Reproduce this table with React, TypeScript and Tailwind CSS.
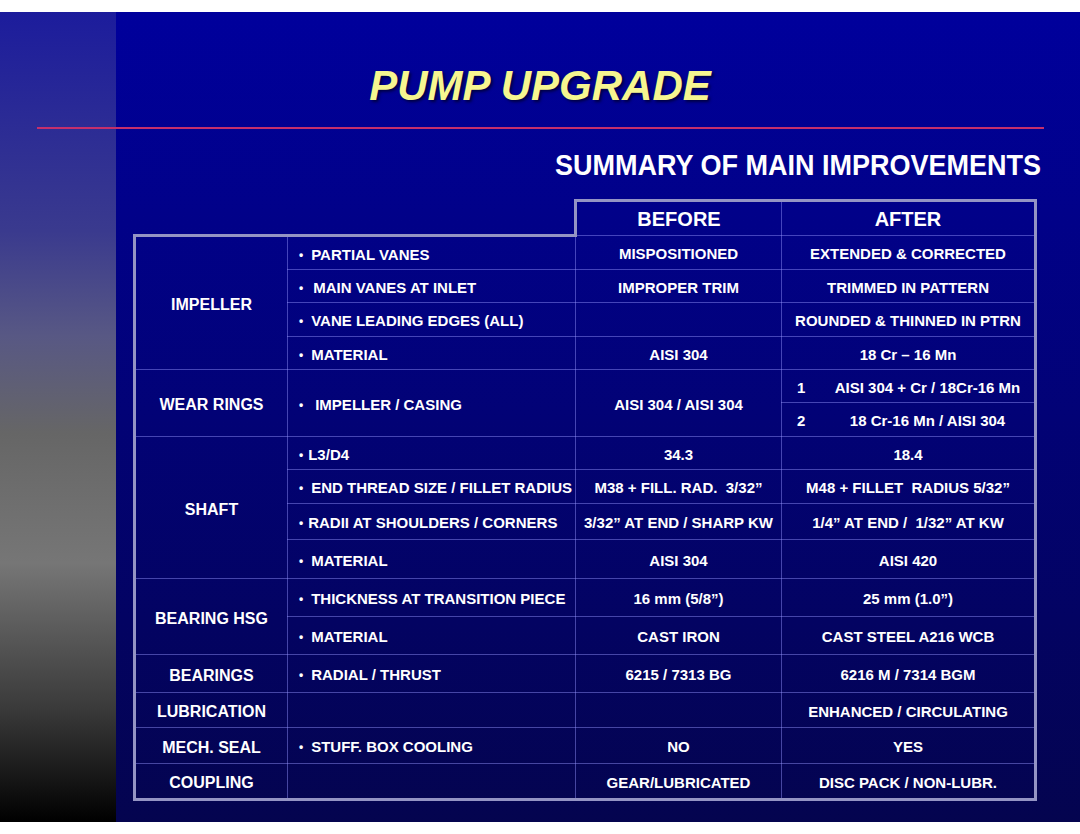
import React from 'react';

type Row = {
  item?: string | null;
  pad?: string;
  before?: string | null;
  after: React.ReactNode;
  h: string;
  span?: number;
};

type Group = { name: string; rows: Row[] };

const GROUPS: Group[] = [
  {
    name: 'IMPELLER',
    rows: [
      { item: 'PARTIAL VANES', before: 'MISPOSITIONED', after: 'EXTENDED & CORRECTED', h: 'h-[34px]' },
      { item: 'MAIN VANES AT INLET', pad: 'ml-[10px]', before: 'IMPROPER TRIM', after: 'TRIMMED IN PATTERN', h: 'h-[33px]' },
      { item: 'VANE LEADING EDGES (ALL)', before: '', after: 'ROUNDED & THINNED IN PTRN', h: 'h-[34px]' },
      { item: 'MATERIAL', before: 'AISI 304', after: '18 Cr – 16 Mn', h: 'h-[33px]' },
    ],
  },
  {
    name: 'WEAR RINGS',
    rows: [
      {
        item: 'IMPELLER / CASING',
        pad: 'ml-[12px]',
        before: 'AISI 304 / AISI 304',
        span: 2,
        after: <Numbered n="1" text="AISI 304 + Cr / 18Cr-16 Mn" />,
        h: 'h-[33px]',
      },
      { item: null, before: null, after: <Numbered n="2" text="18 Cr-16 Mn / AISI 304" />, h: 'h-[34px]' },
    ],
  },
  {
    name: 'SHAFT',
    rows: [
      { item: 'L3/D4', pad: 'ml-[5px]', before: '34.3', after: '18.4', h: 'h-[33px]' },
      { item: 'END THREAD SIZE / FILLET RADIUS', before: 'M38 + FILL. RAD.  3/32”', after: 'M48 + FILLET  RADIUS 5/32”', h: 'h-[34px]' },
      { item: 'RADII AT SHOULDERS / CORNERS', pad: 'ml-[5px]', before: '3/32” AT END / SHARP KW', after: '1/4” AT END /  1/32” AT KW', h: 'h-[36px]' },
      { item: 'MATERIAL', before: 'AISI 304', after: 'AISI 420', h: 'h-[39px]' },
    ],
  },
  {
    name: 'BEARING HSG',
    rows: [
      { item: 'THICKNESS AT TRANSITION PIECE', before: '16 mm (5/8”)', after: '25 mm (1.0”)', h: 'h-[38px]' },
      { item: 'MATERIAL', before: 'CAST IRON', after: 'CAST STEEL A216 WCB', h: 'h-[38px]' },
    ],
  },
  { name: 'BEARINGS', rows: [{ item: 'RADIAL / THRUST', before: '6215 / 7313 BG', after: '6216 M / 7314 BGM', h: 'h-[38px]' }] },
  { name: 'LUBRICATION', rows: [{ item: '', before: '', after: 'ENHANCED / CIRCULATING', h: 'h-[35px]' }] },
  { name: 'MECH. SEAL', rows: [{ item: 'STUFF. BOX COOLING', before: 'NO', after: 'YES', h: 'h-[36px]' }] },
  { name: 'COUPLING', rows: [{ item: '', before: 'GEAR/LUBRICATED', after: 'DISC PACK / NON-LUBR.', h: 'h-[36px]' }] },
];

function Numbered({ n, text }: { n: string; text: string }) {
  return (
    <div className="flex items-center">
      <span className="w-[39px] pl-[15px] text-left">{n}</span>
      <span className="flex-1 text-center">{text}</span>
    </div>
  );
}

const thin = 'border border-[rgba(150,150,255,0.45)]';

export default function App() {
  return (
    <div className="w-[1080px] h-[834px] bg-white pt-[12px] font-['Liberation_Sans',Arial,sans-serif]">
      <div className="flex h-[810px]">
        <div className="w-[116px] shrink-0 bg-[linear-gradient(to_bottom,#1c1c9c_0%,#3a3a8e_27%,#585884_40%,#666666_52%,#767676_68%,#3a3a3a_86%,#000000_100%)]" />
        <div className="flex-1 flex flex-col bg-[linear-gradient(to_bottom,#00009c,#04044f)]">
          <h1 className="-ml-[116px] mt-[53px] h-[42px] text-center text-[42px] leading-[42px] font-bold italic text-[#f6f690] [text-shadow:2px_2px_3px_rgba(0,0,0,0.55)]">
            PUMP UPGRADE
          </h1>
          <div className="-ml-[79px] mt-[20px] h-[2px] w-[1007px] bg-[#c42f6c]" />
          <div className="mt-[21px] mr-[39px] self-end">
            <p className="origin-right scale-x-[0.9] whitespace-nowrap text-[30px] leading-[30px] font-bold text-white">
              SUMMARY OF MAIN IMPROVEMENTS
            </p>
          </div>
          <table className="ml-[17px] mt-[19px] w-[904px] table-fixed border-collapse text-[15px] font-bold text-white">
            <colgroup>
              <col className="w-[153px]" />
              <col className="w-[288px]" />
              <col className="w-[206px]" />
              <col className="w-[254px]" />
            </colgroup>
            <thead>
              <tr className="h-[35px]">
                <td colSpan={2} className="border-0 p-0" />
                <th className={`${thin} border-t-[3px] border-l-[3px] border-t-[#9494c4] border-l-[#9494c4] text-center text-[20px] font-bold`}>BEFORE</th>
                <th className={`${thin} border-t-[3px] border-r-[3px] border-t-[#9494c4] border-r-[#9494c4] text-center text-[20px] font-bold`}>AFTER</th>
              </tr>
            </thead>
            <tbody>
              {GROUPS.map((g, gi) => {
                const lastGroup = gi === GROUPS.length - 1;
                return g.rows.map((r, ri) => {
                  const firstRow = gi === 0 && ri === 0;
                  const lastRow = lastGroup && ri === g.rows.length - 1;
                  const top = firstRow ? 'border-t-[3px] border-t-[#9494c4]' : '';
                  const bottom = lastRow ? 'border-b-[3px] border-b-[#9494c4]' : '';
                  return (
                    <tr key={`${gi}-${ri}`} className={r.h}>
                      {ri === 0 && (
                        <td
                          rowSpan={g.rows.length}
                          className={`${thin} border-l-[3px] border-l-[#9494c4] ${top} ${lastGroup ? 'border-b-[3px] border-b-[#9494c4]' : ''} p-0 pt-[4px] text-center text-[16px]`}
                        >
                          {g.name}
                        </td>
                      )}
                      {r.item !== null && (
                        <td rowSpan={r.span} className={`${thin} ${top} ${bottom} p-0 pt-[4px] pl-[11px] whitespace-pre`}>
                          {r.item ? (
                            <>
                              <span className="text-[12px] align-[1px]">•</span>
                              <span className={r.pad ?? 'ml-[8px]'}>{r.item}</span>
                            </>
                          ) : null}
                        </td>
                      )}
                      {r.before !== null && (
                        <td rowSpan={r.span} className={`${thin} ${bottom} p-0 pt-[4px] text-center whitespace-pre`}>
                          {r.before}
                        </td>
                      )}
                      <td className={`${thin} border-r-[3px] border-r-[#9494c4] ${bottom} p-0 pt-[4px] text-center whitespace-pre`}>
                        {r.after}
                      </td>
                    </tr>
                  );
                });
              })}
            </tbody>
          </table>
        </div>
      </div>
    </div>
  );
}
